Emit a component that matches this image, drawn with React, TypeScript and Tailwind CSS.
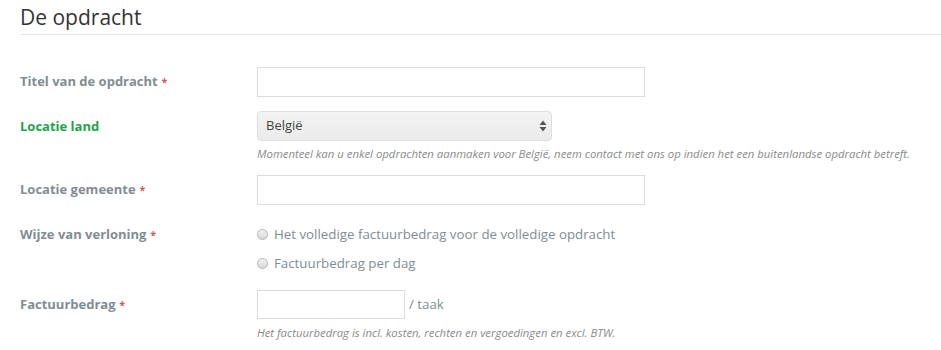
export default function App() {
    const label = "w-[237px] shrink-0 text-[13px] font-bold text-[#808d93]";
    const star = <span className="ml-1 text-[10px] text-[#d9534f]">*</span>;
    return (
        <main className="min-h-[350px] bg-white pl-5 font-['Open_Sans',sans-serif]">
            <h2 className="border-b border-[#e6e6e6] pt-[5px] pb-[5px] text-[21px] leading-6 text-[#333]">De opdracht</h2>

            <form className="mt-8">
                <div className="flex items-center">
                    <label className={label}>Titel van de opdracht{star}</label>
                    <input className="h-[30px] w-[388px] border border-[#dcdcdc] bg-white"/>
                </div>

                <div className="mt-[14px] flex items-start">
                    <label className={label + " leading-[30px] !text-[#22a44a]"}>Locatie land</label>
                    <div>
                        <div className="flex h-[30px] w-[295px] items-center justify-between rounded-[4px] border border-[#dedede] bg-gradient-to-b from-[#f3f3f3] to-[#ebebeb] pl-2 pr-[4px] text-[13px] text-[#444]">
                            <span>België</span>
                            <svg width="8" height="12" viewBox="0 0 8 12">
                                <path d="M4 0.5 L7.5 5 L0.5 5 Z" fill="#555"/>
                                <path d="M4 11.5 L7.5 7 L0.5 7 Z" fill="#555"/>
                            </svg>
                        </div>
                        <p className="mt-[5px] text-[11.35px] italic leading-4 text-[#8a8a8a]">
                            Momenteel kan u enkel opdrachten aanmaken voor België, neem contact met ons op indien het een buitenlandse opdracht betreft.
                        </p>
                    </div>
                </div>

                <div className="mt-[13px] flex items-center">
                    <label className={label}>Locatie gemeente{star}</label>
                    <input className="h-[30px] w-[388px] border border-[#dcdcdc] bg-white"/>
                </div>

                <div className="mt-[15px] flex items-start">
                    <label className={label + " leading-[29px]"}>Wijze van verloning{star}</label>
                    <div className="text-[13.3px] text-[#808d93]">
                        {["Het volledige factuurbedrag voor de volledige opdracht", "Factuurbedrag per dag"].map((t) => (
                            <div key={t} className="flex h-[29px] items-center gap-[6px]">
                                <span className="h-[11px] w-[11px] rounded-full border border-[#b5b5b5] bg-gradient-to-b from-[#f4f4f4] to-[#d8d8d8]"/>
                                <span>{t}</span>
                            </div>
                        ))}
                    </div>
                </div>

                <div className="mt-[12px] flex items-start">
                    <label className={label + " leading-[29px]"}>Factuurbedrag{star}</label>
                    <div>
                        <div className="flex items-center">
                            <input className="h-[29px] w-[148px] border border-[#dcdcdc] bg-white"/>
                            <span className="ml-1 text-[13.3px] text-[#808d93]">/ taak</span>
                        </div>
                        <p className="mt-[6px] text-[11.35px] italic leading-4 text-[#8a8a8a]">
                            Het factuurbedrag is incl. kosten, rechten en vergoedingen en excl. BTW.
                        </p>
                    </div>
                </div>
            </form>
        </main>
    )
}
